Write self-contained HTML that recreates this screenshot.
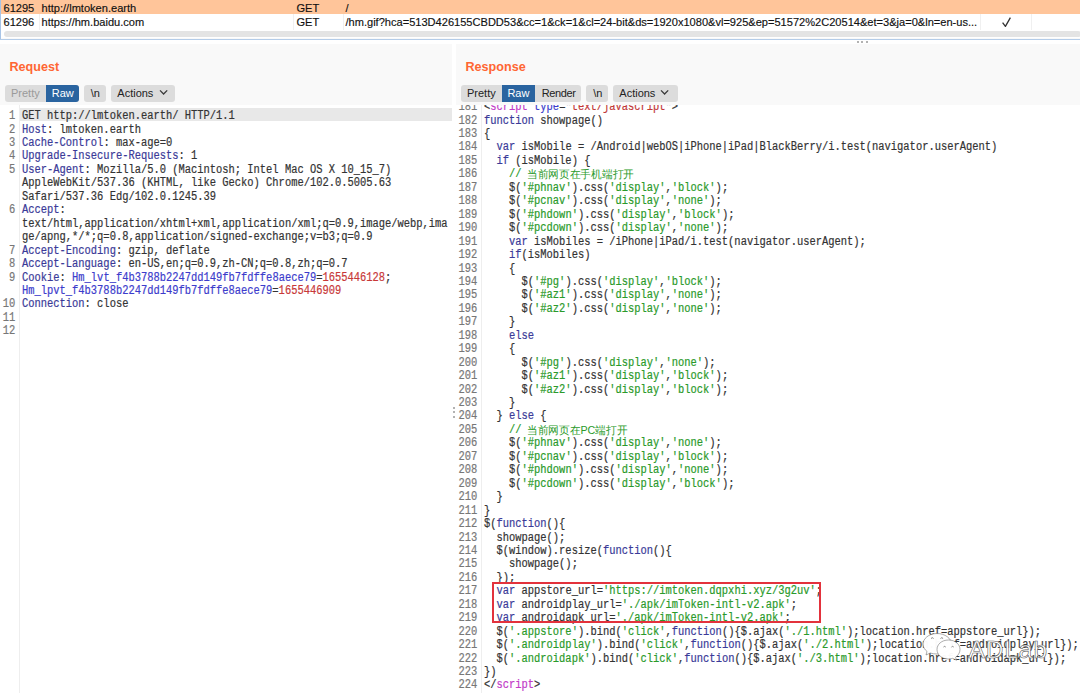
<!DOCTYPE html>
<html><head><meta charset="utf-8"><style>
*{margin:0;padding:0;box-sizing:border-box}
html,body{width:1080px;height:693px;overflow:hidden;background:#f9f9f9;position:relative}
body{font-family:"Liberation Sans",sans-serif;color:#222}
.abs{position:absolute}
.ln,.cd{position:absolute;font-family:"Liberation Mono",monospace;font-size:12.0px;line-height:13.45px;height:13.45px;white-space:pre;transform:scaleX(0.86917);transform-origin:0 0}
.ln{transform-origin:100% 0}
.cjk{position:absolute;font-size:11.0px;transform:scaleX(0.972);transform-origin:0 0;line-height:13.45px;height:13.45px;white-space:pre;color:#2a9a2a}
.ln{color:#777;text-align:right;-webkit-text-stroke:0.2px #777}
.cd{color:#333;-webkit-text-stroke:0.2px #333}
.tr{position:absolute;font-size:11.07px;line-height:14px;white-space:pre;color:#111;-webkit-text-stroke:0.15px #111}
.btn{position:absolute;top:84.7px;height:17px;background:#dcdcdc;border-radius:3px;font-size:11px;line-height:17px;color:#222;white-space:pre}
.ttl{position:absolute;font-weight:bold;font-size:12.6px;line-height:15px;color:#ff6633}
</style></head>
<body>
<div class="abs" style="left:0;top:0;width:1080px;height:38px;background:#fff"></div>
<div class="abs" style="left:0;top:0;width:1080px;height:14.3px;background:#ffc59a"></div>
<div class="abs" style="left:38.5px;top:14.3px;width:1px;height:15.4px;background:#f0f0f0"></div>
<div class="abs" style="left:293px;top:14.3px;width:1px;height:15.4px;background:#f0f0f0"></div>
<div class="abs" style="left:343.4px;top:14.3px;width:1px;height:15.4px;background:#f0f0f0"></div>
<div class="abs" style="left:980.3px;top:14.3px;width:1px;height:15.4px;background:#f0f0f0"></div>
<div class="abs" style="left:1030.5px;top:14.3px;width:1px;height:15.4px;background:#f0f0f0"></div>
<div class="abs" style="left:3.5px;top:31.4px;width:1077px;height:5.4px;background:#e4e4e4;border-radius:3px"></div>
<div class="abs" style="left:0;top:0;width:1.2px;height:40px;background:#a8c4e6"></div>
<div class="abs" style="left:0;top:38.5px;width:1080px;height:1.5px;background:#b4cce8"></div>
<div class="abs" style="left:0;top:40px;width:1080px;height:4px;background:#fff"></div>
<div class="abs" style="left:856.5px;top:41px;width:2px;height:2px;border-radius:1px;background:#999"></div>
<div class="abs" style="left:861px;top:41px;width:2px;height:2px;border-radius:1px;background:#999"></div>
<div class="abs" style="left:865.5px;top:41px;width:2px;height:2px;border-radius:1px;background:#999"></div>
<div class="tr" style="left:3.5px;top:1px">61295</div>
<div class="tr" style="left:41.5px;top:1px">http://lmtoken.earth</div>
<div class="tr" style="left:296.5px;top:1px">GET</div>
<div class="tr" style="left:345.5px;top:1px">/</div>
<div class="tr" style="left:3.5px;top:15.3px">61296</div>
<div class="tr" style="left:41.5px;top:15.3px">https://hm.baidu.com</div>
<div class="tr" style="left:296.5px;top:15.3px">GET</div>
<div class="tr" style="left:345.5px;top:15.3px">/hm.gif?hca=513D426155CBDD53&amp;cc=1&amp;ck=1&amp;cl=24-bit&amp;ds=1920x1080&amp;vl=925&amp;ep=51572%2C20514&amp;et=3&amp;ja=0&amp;ln=en-us...</div>
<svg class="abs" style="left:1000px;top:15px" width="14" height="14" viewBox="0 0 14 14"><path d="M2.6 7.6 L5.4 11.4 L10.4 2.6" fill="none" stroke="#333" stroke-width="1.3" stroke-linejoin="round"/></svg>
<div class="abs" style="left:451.5px;top:44px;width:4.5px;height:61px;background:#fff"></div>
<div class="abs" style="left:0;top:105px;width:1080px;height:588px;background:#fff"></div>
<div class="abs" style="left:19px;top:105px;width:1px;height:588px;background:#eee"></div>
<div class="abs" style="left:20px;top:108.2px;width:431.5px;height:12.6px;background:#e8e8e8"></div>
<div class="ln" style="top:110.100px;left:0;width:15.3px">1</div>
<div class="cd" style="top:110.100px;left:21.5px">GET http://lmtoken.earth/ HTTP/1.1</div>
<div class="ln" style="top:123.550px;left:0;width:15.3px">2</div>
<div class="cd" style="top:123.550px;left:21.5px"><span style="color:#3a3a98;-webkit-text-stroke-color:#3a3a98">Host</span>: lmtoken.earth</div>
<div class="ln" style="top:137.000px;left:0;width:15.3px">3</div>
<div class="cd" style="top:137.000px;left:21.5px"><span style="color:#3a3a98;-webkit-text-stroke-color:#3a3a98">Cache-Control</span>: max-age=0</div>
<div class="ln" style="top:150.450px;left:0;width:15.3px">4</div>
<div class="cd" style="top:150.450px;left:21.5px"><span style="color:#3a3a98;-webkit-text-stroke-color:#3a3a98">Upgrade-Insecure-Requests</span>: 1</div>
<div class="ln" style="top:163.900px;left:0;width:15.3px">5</div>
<div class="cd" style="top:163.900px;left:21.5px"><span style="color:#3a3a98;-webkit-text-stroke-color:#3a3a98">User-Agent</span>: Mozilla/5.0 (Macintosh; Intel Mac OS X 10_15_7)</div>
<div class="cd" style="top:177.350px;left:21.5px">AppleWebKit/537.36 (KHTML, like Gecko) Chrome/102.0.5005.63</div>
<div class="cd" style="top:190.800px;left:21.5px">Safari/537.36 Edg/102.0.1245.39</div>
<div class="ln" style="top:204.250px;left:0;width:15.3px">6</div>
<div class="cd" style="top:204.250px;left:21.5px"><span style="color:#3a3a98;-webkit-text-stroke-color:#3a3a98">Accept</span>:</div>
<div class="cd" style="top:217.700px;left:21.5px">text/html,application/xhtml+xml,application/xml;q=0.9,image/webp,ima</div>
<div class="cd" style="top:231.150px;left:21.5px">ge/apng,*/*;q=0.8,application/signed-exchange;v=b3;q=0.9</div>
<div class="ln" style="top:244.600px;left:0;width:15.3px">7</div>
<div class="cd" style="top:244.600px;left:21.5px"><span style="color:#3a3a98;-webkit-text-stroke-color:#3a3a98">Accept-Encoding</span>: gzip, deflate</div>
<div class="ln" style="top:258.050px;left:0;width:15.3px">8</div>
<div class="cd" style="top:258.050px;left:21.5px"><span style="color:#3a3a98;-webkit-text-stroke-color:#3a3a98">Accept-Language</span>: en-US,en;q=0.9,zh-CN;q=0.8,zh;q=0.7</div>
<div class="ln" style="top:271.500px;left:0;width:15.3px">9</div>
<div class="cd" style="top:271.500px;left:21.5px"><span style="color:#3a3a98;-webkit-text-stroke-color:#3a3a98">Cookie</span>: <span style="color:#3c3ccc;-webkit-text-stroke-color:#3c3ccc">Hm_lvt_f4b3788b2247dd149fb7fdffe8aece79</span>=<span style="color:#c83838;-webkit-text-stroke-color:#c83838">1655446128</span>;</div>
<div class="cd" style="top:284.950px;left:21.5px"><span style="color:#3c3ccc;-webkit-text-stroke-color:#3c3ccc">Hm_lpvt_f4b3788b2247dd149fb7fdffe8aece79</span>=<span style="color:#c83838;-webkit-text-stroke-color:#c83838">1655446909</span></div>
<div class="ln" style="top:298.400px;left:0;width:15.3px">10</div>
<div class="cd" style="top:298.400px;left:21.5px"><span style="color:#3a3a98;-webkit-text-stroke-color:#3a3a98">Connection</span>: close</div>
<div class="ln" style="top:311.850px;left:0;width:15.3px">11</div>
<div class="cd" style="top:311.850px;left:21.5px"></div>
<div class="ln" style="top:325.300px;left:0;width:15.3px">12</div>
<div class="cd" style="top:325.300px;left:21.5px"></div>
<div class="abs" style="left:481px;top:105px;width:1px;height:588px;background:#eee"></div>
<div class="ln" style="top:101.100px;left:0;width:477.3px">181</div>
<div class="cd" style="top:101.100px;left:483.5px">&lt;<span style="color:#c23bc8;-webkit-text-stroke-color:#c23bc8">script</span> <span style="color:#3c3ccc;-webkit-text-stroke-color:#3c3ccc">type</span>=<span style="color:#777;-webkit-text-stroke-color:#777">&quot;</span><span style="color:#c23838;-webkit-text-stroke-color:#c23838">text/javascript</span><span style="color:#777;-webkit-text-stroke-color:#777">&quot;</span>&gt;</div>
<div class="ln" style="top:114.550px;left:0;width:477.3px">182</div>
<div class="cd" style="top:114.550px;left:483.5px"><span style="color:#3a3a98;-webkit-text-stroke-color:#3a3a98">function</span> showpage()</div>
<div class="ln" style="top:128.000px;left:0;width:477.3px">183</div>
<div class="cd" style="top:128.000px;left:483.5px">{</div>
<div class="ln" style="top:141.450px;left:0;width:477.3px">184</div>
<div class="cd" style="top:141.450px;left:483.5px">  <span style="color:#3a3a98;-webkit-text-stroke-color:#3a3a98">var</span> isMobile = /Android|webOS|iPhone|iPad|BlackBerry/i.test(navigator.userAgent)</div>
<div class="ln" style="top:154.900px;left:0;width:477.3px">185</div>
<div class="cd" style="top:154.900px;left:483.5px">  <span style="color:#3a3a98;-webkit-text-stroke-color:#3a3a98">if</span> (isMobile) {</div>
<div class="cjk" style="top:167.950px;left:527.306px">当前网页在手机端打开</div>
<div class="ln" style="top:168.350px;left:0;width:477.3px">186</div>
<div class="cd" style="top:168.350px;left:483.5px">    <span style="color:#2a9a2a;-webkit-text-stroke-color:#2a9a2a">// </span></div>
<div class="ln" style="top:181.800px;left:0;width:477.3px">187</div>
<div class="cd" style="top:181.800px;left:483.5px">    $(<span style="color:#2a9a2a;-webkit-text-stroke-color:#2a9a2a">&#x27;#phnav&#x27;</span>).css(<span style="color:#2a9a2a;-webkit-text-stroke-color:#2a9a2a">&#x27;display&#x27;</span>,<span style="color:#2a9a2a;-webkit-text-stroke-color:#2a9a2a">&#x27;block&#x27;</span>);</div>
<div class="ln" style="top:195.250px;left:0;width:477.3px">188</div>
<div class="cd" style="top:195.250px;left:483.5px">    $(<span style="color:#2a9a2a;-webkit-text-stroke-color:#2a9a2a">&#x27;#pcnav&#x27;</span>).css(<span style="color:#2a9a2a;-webkit-text-stroke-color:#2a9a2a">&#x27;display&#x27;</span>,<span style="color:#2a9a2a;-webkit-text-stroke-color:#2a9a2a">&#x27;none&#x27;</span>);</div>
<div class="ln" style="top:208.700px;left:0;width:477.3px">189</div>
<div class="cd" style="top:208.700px;left:483.5px">    $(<span style="color:#2a9a2a;-webkit-text-stroke-color:#2a9a2a">&#x27;#phdown&#x27;</span>).css(<span style="color:#2a9a2a;-webkit-text-stroke-color:#2a9a2a">&#x27;display&#x27;</span>,<span style="color:#2a9a2a;-webkit-text-stroke-color:#2a9a2a">&#x27;block&#x27;</span>);</div>
<div class="ln" style="top:222.150px;left:0;width:477.3px">190</div>
<div class="cd" style="top:222.150px;left:483.5px">    $(<span style="color:#2a9a2a;-webkit-text-stroke-color:#2a9a2a">&#x27;#pcdown&#x27;</span>).css(<span style="color:#2a9a2a;-webkit-text-stroke-color:#2a9a2a">&#x27;display&#x27;</span>,<span style="color:#2a9a2a;-webkit-text-stroke-color:#2a9a2a">&#x27;none&#x27;</span>);</div>
<div class="ln" style="top:235.600px;left:0;width:477.3px">191</div>
<div class="cd" style="top:235.600px;left:483.5px">    <span style="color:#3a3a98;-webkit-text-stroke-color:#3a3a98">var</span> isMobiles = /iPhone|iPad/i.test(navigator.userAgent);</div>
<div class="ln" style="top:249.050px;left:0;width:477.3px">192</div>
<div class="cd" style="top:249.050px;left:483.5px">    <span style="color:#3a3a98;-webkit-text-stroke-color:#3a3a98">if</span>(isMobiles)</div>
<div class="ln" style="top:262.500px;left:0;width:477.3px">193</div>
<div class="cd" style="top:262.500px;left:483.5px">    {</div>
<div class="ln" style="top:275.950px;left:0;width:477.3px">194</div>
<div class="cd" style="top:275.950px;left:483.5px">      $(<span style="color:#2a9a2a;-webkit-text-stroke-color:#2a9a2a">&#x27;#pg&#x27;</span>).css(<span style="color:#2a9a2a;-webkit-text-stroke-color:#2a9a2a">&#x27;display&#x27;</span>,<span style="color:#2a9a2a;-webkit-text-stroke-color:#2a9a2a">&#x27;block&#x27;</span>);</div>
<div class="ln" style="top:289.400px;left:0;width:477.3px">195</div>
<div class="cd" style="top:289.400px;left:483.5px">      $(<span style="color:#2a9a2a;-webkit-text-stroke-color:#2a9a2a">&#x27;#az1&#x27;</span>).css(<span style="color:#2a9a2a;-webkit-text-stroke-color:#2a9a2a">&#x27;display&#x27;</span>,<span style="color:#2a9a2a;-webkit-text-stroke-color:#2a9a2a">&#x27;none&#x27;</span>);</div>
<div class="ln" style="top:302.850px;left:0;width:477.3px">196</div>
<div class="cd" style="top:302.850px;left:483.5px">      $(<span style="color:#2a9a2a;-webkit-text-stroke-color:#2a9a2a">&#x27;#az2&#x27;</span>).css(<span style="color:#2a9a2a;-webkit-text-stroke-color:#2a9a2a">&#x27;display&#x27;</span>,<span style="color:#2a9a2a;-webkit-text-stroke-color:#2a9a2a">&#x27;none&#x27;</span>);</div>
<div class="ln" style="top:316.300px;left:0;width:477.3px">197</div>
<div class="cd" style="top:316.300px;left:483.5px">    }</div>
<div class="ln" style="top:329.750px;left:0;width:477.3px">198</div>
<div class="cd" style="top:329.750px;left:483.5px">    <span style="color:#3a3a98;-webkit-text-stroke-color:#3a3a98">else</span></div>
<div class="ln" style="top:343.200px;left:0;width:477.3px">199</div>
<div class="cd" style="top:343.200px;left:483.5px">    {</div>
<div class="ln" style="top:356.650px;left:0;width:477.3px">200</div>
<div class="cd" style="top:356.650px;left:483.5px">      $(<span style="color:#2a9a2a;-webkit-text-stroke-color:#2a9a2a">&#x27;#pg&#x27;</span>).css(<span style="color:#2a9a2a;-webkit-text-stroke-color:#2a9a2a">&#x27;display&#x27;</span>,<span style="color:#2a9a2a;-webkit-text-stroke-color:#2a9a2a">&#x27;none&#x27;</span>);</div>
<div class="ln" style="top:370.100px;left:0;width:477.3px">201</div>
<div class="cd" style="top:370.100px;left:483.5px">      $(<span style="color:#2a9a2a;-webkit-text-stroke-color:#2a9a2a">&#x27;#az1&#x27;</span>).css(<span style="color:#2a9a2a;-webkit-text-stroke-color:#2a9a2a">&#x27;display&#x27;</span>,<span style="color:#2a9a2a;-webkit-text-stroke-color:#2a9a2a">&#x27;block&#x27;</span>);</div>
<div class="ln" style="top:383.550px;left:0;width:477.3px">202</div>
<div class="cd" style="top:383.550px;left:483.5px">      $(<span style="color:#2a9a2a;-webkit-text-stroke-color:#2a9a2a">&#x27;#az2&#x27;</span>).css(<span style="color:#2a9a2a;-webkit-text-stroke-color:#2a9a2a">&#x27;display&#x27;</span>,<span style="color:#2a9a2a;-webkit-text-stroke-color:#2a9a2a">&#x27;block&#x27;</span>);</div>
<div class="ln" style="top:397.000px;left:0;width:477.3px">203</div>
<div class="cd" style="top:397.000px;left:483.5px">    }</div>
<div class="ln" style="top:410.450px;left:0;width:477.3px">204</div>
<div class="cd" style="top:410.450px;left:483.5px">  } <span style="color:#3a3a98;-webkit-text-stroke-color:#3a3a98">else</span> {</div>
<div class="cjk" style="top:423.500px;left:527.306px">当前网页在PC端打开</div>
<div class="ln" style="top:423.900px;left:0;width:477.3px">205</div>
<div class="cd" style="top:423.900px;left:483.5px">    <span style="color:#2a9a2a;-webkit-text-stroke-color:#2a9a2a">// </span></div>
<div class="ln" style="top:437.350px;left:0;width:477.3px">206</div>
<div class="cd" style="top:437.350px;left:483.5px">    $(<span style="color:#2a9a2a;-webkit-text-stroke-color:#2a9a2a">&#x27;#phnav&#x27;</span>).css(<span style="color:#2a9a2a;-webkit-text-stroke-color:#2a9a2a">&#x27;display&#x27;</span>,<span style="color:#2a9a2a;-webkit-text-stroke-color:#2a9a2a">&#x27;none&#x27;</span>);</div>
<div class="ln" style="top:450.800px;left:0;width:477.3px">207</div>
<div class="cd" style="top:450.800px;left:483.5px">    $(<span style="color:#2a9a2a;-webkit-text-stroke-color:#2a9a2a">&#x27;#pcnav&#x27;</span>).css(<span style="color:#2a9a2a;-webkit-text-stroke-color:#2a9a2a">&#x27;display&#x27;</span>,<span style="color:#2a9a2a;-webkit-text-stroke-color:#2a9a2a">&#x27;block&#x27;</span>);</div>
<div class="ln" style="top:464.250px;left:0;width:477.3px">208</div>
<div class="cd" style="top:464.250px;left:483.5px">    $(<span style="color:#2a9a2a;-webkit-text-stroke-color:#2a9a2a">&#x27;#phdown&#x27;</span>).css(<span style="color:#2a9a2a;-webkit-text-stroke-color:#2a9a2a">&#x27;display&#x27;</span>,<span style="color:#2a9a2a;-webkit-text-stroke-color:#2a9a2a">&#x27;none&#x27;</span>);</div>
<div class="ln" style="top:477.700px;left:0;width:477.3px">209</div>
<div class="cd" style="top:477.700px;left:483.5px">    $(<span style="color:#2a9a2a;-webkit-text-stroke-color:#2a9a2a">&#x27;#pcdown&#x27;</span>).css(<span style="color:#2a9a2a;-webkit-text-stroke-color:#2a9a2a">&#x27;display&#x27;</span>,<span style="color:#2a9a2a;-webkit-text-stroke-color:#2a9a2a">&#x27;block&#x27;</span>);</div>
<div class="ln" style="top:491.150px;left:0;width:477.3px">210</div>
<div class="cd" style="top:491.150px;left:483.5px">  }</div>
<div class="ln" style="top:504.600px;left:0;width:477.3px">211</div>
<div class="cd" style="top:504.600px;left:483.5px">}</div>
<div class="ln" style="top:518.050px;left:0;width:477.3px">212</div>
<div class="cd" style="top:518.050px;left:483.5px">$(<span style="color:#3a3a98;-webkit-text-stroke-color:#3a3a98">function</span>(){</div>
<div class="ln" style="top:531.500px;left:0;width:477.3px">213</div>
<div class="cd" style="top:531.500px;left:483.5px">  showpage();</div>
<div class="ln" style="top:544.950px;left:0;width:477.3px">214</div>
<div class="cd" style="top:544.950px;left:483.5px">  $(window).resize(<span style="color:#3a3a98;-webkit-text-stroke-color:#3a3a98">function</span>(){</div>
<div class="ln" style="top:558.400px;left:0;width:477.3px">215</div>
<div class="cd" style="top:558.400px;left:483.5px">    showpage();</div>
<div class="ln" style="top:571.850px;left:0;width:477.3px">216</div>
<div class="cd" style="top:571.850px;left:483.5px">  });</div>
<div class="ln" style="top:585.300px;left:0;width:477.3px">217</div>
<div class="cd" style="top:585.300px;left:483.5px">  <span style="color:#3a3a98;-webkit-text-stroke-color:#3a3a98">var</span> appstore_url=<span style="color:#2a9a2a;-webkit-text-stroke-color:#2a9a2a">&#x27;https://imtoken.dqpxhi.xyz/3g2uv&#x27;</span>;</div>
<div class="ln" style="top:598.750px;left:0;width:477.3px">218</div>
<div class="cd" style="top:598.750px;left:483.5px">  <span style="color:#3a3a98;-webkit-text-stroke-color:#3a3a98">var</span> androidplay_url=<span style="color:#2a9a2a;-webkit-text-stroke-color:#2a9a2a">&#x27;./apk/imToken-intl-v2.apk&#x27;</span>;</div>
<div class="ln" style="top:612.200px;left:0;width:477.3px">219</div>
<div class="cd" style="top:612.200px;left:483.5px">  <span style="color:#3a3a98;-webkit-text-stroke-color:#3a3a98">var</span> androidapk_url=<span style="color:#2a9a2a;-webkit-text-stroke-color:#2a9a2a">&#x27;./apk/imToken-intl-v2.apk&#x27;</span>;</div>
<div class="ln" style="top:625.650px;left:0;width:477.3px">220</div>
<div class="cd" style="top:625.650px;left:483.5px">  $(<span style="color:#2a9a2a;-webkit-text-stroke-color:#2a9a2a">&#x27;.appstore&#x27;</span>).bind(<span style="color:#2a9a2a;-webkit-text-stroke-color:#2a9a2a">&#x27;click&#x27;</span>,<span style="color:#3a3a98;-webkit-text-stroke-color:#3a3a98">function</span>(){$.ajax(<span style="color:#2a9a2a;-webkit-text-stroke-color:#2a9a2a">&#x27;./1.html&#x27;</span>);location.href=appstore_url});</div>
<div class="ln" style="top:639.100px;left:0;width:477.3px">221</div>
<div class="cd" style="top:639.100px;left:483.5px">  $(<span style="color:#2a9a2a;-webkit-text-stroke-color:#2a9a2a">&#x27;.androidplay&#x27;</span>).bind(<span style="color:#2a9a2a;-webkit-text-stroke-color:#2a9a2a">&#x27;click&#x27;</span>,<span style="color:#3a3a98;-webkit-text-stroke-color:#3a3a98">function</span>(){$.ajax(<span style="color:#2a9a2a;-webkit-text-stroke-color:#2a9a2a">&#x27;./2.html&#x27;</span>);location.href=androidplay_url});</div>
<div class="ln" style="top:652.550px;left:0;width:477.3px">222</div>
<div class="cd" style="top:652.550px;left:483.5px">  $(<span style="color:#2a9a2a;-webkit-text-stroke-color:#2a9a2a">&#x27;.androidapk&#x27;</span>).bind(<span style="color:#2a9a2a;-webkit-text-stroke-color:#2a9a2a">&#x27;click&#x27;</span>,<span style="color:#3a3a98;-webkit-text-stroke-color:#3a3a98">function</span>(){$.ajax(<span style="color:#2a9a2a;-webkit-text-stroke-color:#2a9a2a">&#x27;./3.html&#x27;</span>);location.href=androidapk_url});</div>
<div class="ln" style="top:666.000px;left:0;width:477.3px">223</div>
<div class="cd" style="top:666.000px;left:483.5px">})</div>
<div class="ln" style="top:679.450px;left:0;width:477.3px">224</div>
<div class="cd" style="top:679.450px;left:483.5px">&lt;/<span style="color:#c23bc8;-webkit-text-stroke-color:#c23bc8">script</span>&gt;</div>
<div class="abs" style="left:0;top:44px;width:451.5px;height:61px;background:#f9f9f9"></div>
<div class="abs" style="left:456px;top:44px;width:624px;height:61px;background:#f9f9f9"></div>
<div class="ttl" style="left:9.5px;top:59.5px">Request</div>
<div class="ttl" style="left:465.5px;top:59.5px">Response</div>
<div class="btn" style="left:5px;width:74.2px"></div>
<div class="btn" style="left:5px;width:40.8px;color:#9a9a9a;background:transparent;padding-left:6px">Pretty</div>
<div class="btn" style="left:45.8px;width:33.4px;background:#2a64a0;color:#fff;border-radius:0 3px 3px 0;padding-left:6px">Raw</div>
<div class="btn" style="left:83.8px;width:22px;padding-left:7px">\n</div>
<div class="btn" style="left:110.8px;width:64.2px;padding-left:6.5px">Actions<svg width="10" height="7" style="position:absolute;left:47.8px;top:4.8px" viewBox="0 0 10 7"><path d="M1 1.4 L4.6 5 L8.2 1.4" fill="none" stroke="#3a3a3a" stroke-width="1.3"/></svg></div>
<div class="btn" style="left:461px;width:120.1px"></div>
<div class="btn" style="left:461px;width:40.9px;background:transparent;padding-left:6px">Pretty</div>
<div class="btn" style="left:501.9px;width:33.3px;background:#2a64a0;color:#fff;border-radius:0;padding-left:5.5px">Raw</div>
<div class="btn" style="left:535.2px;width:45.9px;background:transparent;padding-left:6.5px;letter-spacing:-0.35px">Render</div>
<div class="btn" style="left:586.3px;width:21.9px;padding-left:7px">\n</div>
<div class="btn" style="left:613.3px;width:64.6px;padding-left:6px">Actions<svg width="10" height="7" style="position:absolute;left:46.8px;top:4.8px" viewBox="0 0 10 7"><path d="M1 1.4 L4.6 5 L8.2 1.4" fill="none" stroke="#3a3a3a" stroke-width="1.3"/></svg></div>
<div class="abs" style="left:452.7px;top:406.9px;width:2px;height:2px;border-radius:1px;background:#999"></div>
<div class="abs" style="left:452.7px;top:411.4px;width:2px;height:2px;border-radius:1px;background:#999"></div>
<div class="abs" style="left:452.7px;top:415.8px;width:2px;height:2px;border-radius:1px;background:#999"></div>
<div class="abs" style="left:491.5px;top:582px;width:329.8px;height:41.4px;border:2px solid #e3323c"></div>
<svg class="abs" style="left:915px;top:625px" width="140" height="45" viewBox="0 0 140 45">
<g stroke="#555" stroke-width="0.6" stroke-opacity="0.8">
<path d="M22 8.5 C13.5 8.5 8 14 8 19 C8 22 9.6 24.6 12 26.4 L11 30 L15.2 28 C17.2 28.7 19.5 29 22 29 C30 29 36.5 24.5 36.5 19 C36.5 13.5 30 8.5 22 8.5 Z" fill="#fff" fill-opacity="0.97"/>
<path d="M33.5 15 C26.5 15 22 19.5 22 24.5 C22 29.5 26.5 34 33.5 34 C35 34 36.5 33.7 37.8 33.3 L41.5 35.3 L40.6 32.2 C43 30.5 45 27.8 45 24.5 C45 19.5 40.5 15 33.5 15 Z" fill="#fff" fill-opacity="0.97"/>
</g>
<g fill="none" stroke="#666" stroke-width="0.8"><path d="M16 13.5 q1.3 -1.6 2.6 0"/><path d="M25.5 13.5 q1.3 -1.6 2.6 0"/><path d="M28.5 22 q1.1 -1.3 2.2 0"/><path d="M36.5 22 q1.1 -1.3 2.2 0"/></g>
<text x="53.5" y="32.5" font-family="Liberation Sans" font-size="24.5" letter-spacing="0.9" fill="#fff" fill-opacity="1" stroke="#444" stroke-opacity="0.9" stroke-width="0.6">ADLab</text>
</svg>
</body></html>
